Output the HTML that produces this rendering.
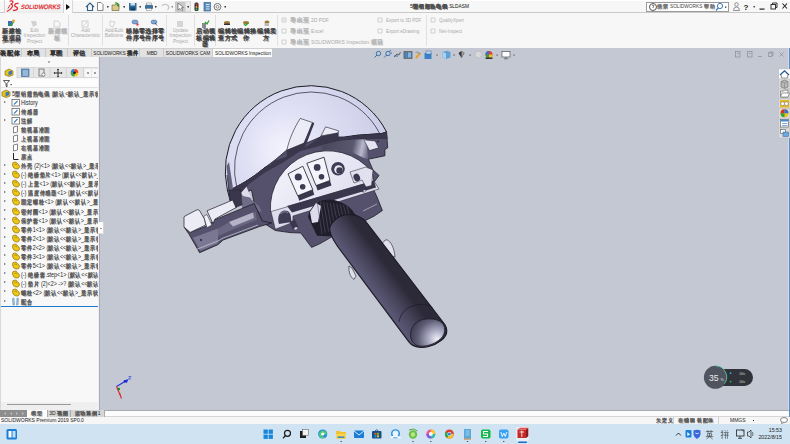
<!DOCTYPE html>
<html><head><meta charset="utf-8">
<style>
*{box-sizing:border-box}
html,body{margin:0;padding:0}
body{width:790px;height:444px;overflow:hidden;position:relative;font-family:"Liberation Sans",sans-serif;background:#c4c8d3;color:#333}
.a{position:absolute}
.c{letter-spacing:.8px;-webkit-text-stroke:.35px currentColor;text-shadow:.6px .7px 0 currentColor;opacity:.72}
#title{left:0;top:0;width:790px;height:13px;background:#f7f7f7;border-top:1px solid #fff;border-bottom:1px solid #c9c9c9}
#ribbon{left:0;top:13px;width:790px;height:35px;background:#f7f7f7}
#tabs{left:0;top:48px;width:273px;height:9px;background:#e2e2e2}
.tab{position:absolute;top:48px;height:9px;border-right:1px solid #c9c9c9;border-top:1px solid #d0d0d0;font-size:5.6px;line-height:8px;text-align:center;color:#222;white-space:nowrap;overflow:hidden}
#panel{left:0;top:57px;width:100px;height:353px;background:#f8f8f8;border-right:1px solid #b5b8c2}
.row{position:absolute;left:0;width:98px;height:9px;font-size:6.3px;line-height:9px;white-space:nowrap;overflow:hidden;color:#1e1e1e}
.arr{position:absolute;left:3.5px;top:2.6px;width:0;height:0;border-left:2.6px solid #666;border-top:1.8px solid transparent;border-bottom:1.8px solid transparent}
.pi{position:absolute;left:12px;top:1px;width:7px;height:7px;border-radius:50% 50% 40% 40%;background:#e8c21a;border:1px solid #8a7210}
.rt{position:absolute;left:21px;top:0;transform:scaleX(.85);transform-origin:0 0}
.rt .c{letter-spacing:.9px}
#btabs{left:0;top:410px;width:790px;height:7px;background:#fcfcfc;border-top:1px solid #a9abb3;border-bottom:1px solid #d6d6d6}
#status{left:0;top:417px;width:790px;height:7px;background:#f6f6f6;font-size:6px;line-height:7px}
#taskbar{left:0;top:424px;width:790px;height:20px;background:#d0e3f3}
.rb{position:absolute;font-size:5.6px;line-height:6.3px;text-align:center;color:#222;white-space:nowrap}
.dis{color:#aaa}
.rb .c{opacity:.85;font-size:6.3px;letter-spacing:.55px}
.tab .c{opacity:.95}
.tab span.t{position:absolute;left:50%;top:0;transform:translateX(-50%) scaleX(.86);transform-origin:50% 50%}
.sep{position:absolute;top:15px;width:1px;height:31px;background:#e0e0e0}
</style></head><body>


<!-- TITLE BAR -->
<div id="title" class="a"></div>
<div class="a" style="left:4px;top:0;width:60px;height:14px;background:linear-gradient(#fdfdfd,#ececec);border:1px solid #d4d4d4;border-top:none;border-radius:0 0 2px 2px"></div>
<svg class="a" style="left:6px;top:0" width="14" height="13" viewBox="0 0 14 13"><path d="M3.5 1.2 Q6.5 0.2 7 2 Q6.8 3.5 4.5 4.2 Q7 4.5 6.5 6.5 Q5.5 9 1 11.5" fill="none" stroke="#e0282e" stroke-width="1.2"/><path d="M12.5 3.5 Q9 3 8.6 5.3 Q8.5 6.6 10.6 7.2 Q12 7.8 11 9.6 Q9.5 10.8 7 10.3" fill="none" stroke="#e0282e" stroke-width="1.3"/><path d="M2 8.5 L4 5" stroke="#e0282e" stroke-width="1"/></svg>
<div class="a" style="left:20px;top:3.4px;font-size:6.3px;line-height:8px;font-weight:bold;color:#e0282e;transform:skewX(-12deg) scaleX(0.92);transform-origin:0 100%;letter-spacing:0;white-space:nowrap">SOLID<span style="font-weight:normal;-webkit-text-stroke:.25px #e0282e">WORKS</span></div>
<div class="a" style="left:64px;top:0;width:9px;height:13px;background:#fafafa;border-right:1px solid #d8d8d8"></div>
<div class="a" style="left:66px;top:3.5px;width:0;height:0;border-left:4px solid #111;border-top:3px solid transparent;border-bottom:3px solid transparent"></div>
<!-- quick access -->
<svg class="a" style="left:85px;top:1px" width="145" height="12" viewBox="85 1 145 12">
 <path d="M86 7 L90 3 L94 7 M87.5 6 V10.5 H92.5 V6" fill="none" stroke="#2d5f88" stroke-width="1.1"/>
 <path d="M97.5 2.5 H101 L103 4.5 V10.5 H97.5 Z" fill="#fff" stroke="#666" stroke-width="0.8"/>
 <rect x="107" y="6" width="1.5" height="1.5" fill="#333"/>
 <path d="M112 5 H115 L116 4 H119 V10.5 H112 Z" fill="#d9c98a" stroke="#7a6a3a" stroke-width="0.7"/><path d="M115 3 Q118 2.5 118.5 6 L117 5" fill="none" stroke="#2a9a2a" stroke-width="1.2"/>
 <rect x="123.5" y="6" width="1.5" height="1.5" fill="#333"/>
 <rect x="129" y="3" width="7.5" height="7.5" fill="#2b6a99"/><rect x="130.5" y="3" width="4.5" height="2.5" fill="#cfe0ee"/><rect x="130.5" y="7.5" width="4.5" height="3" fill="#1b4466"/>
 <rect x="139.5" y="6" width="1.5" height="1.5" fill="#333"/>
 <rect x="145" y="5" width="8" height="4" fill="#3a6f9e" rx="1"/><rect x="146.5" y="3" width="5" height="2" fill="#fff" stroke="#777" stroke-width="0.5"/><rect x="146.5" y="8.5" width="5" height="2" fill="#fff" stroke="#777" stroke-width="0.5"/>
 <rect x="155" y="6" width="1.5" height="1.5" fill="#333"/>
 <path d="M162 5.5 Q166 3 168.5 6 Q169.5 8 167.5 10" fill="none" stroke="#c4c4c4" stroke-width="1.2"/>
 <rect x="171.5" y="6" width="1.5" height="1.5" fill="#888"/>
 <rect x="175" y="1.5" width="16" height="10.5" fill="#c9c9c9"/><rect x="185.5" y="2" width="5" height="9.5" fill="#ebebeb"/>
 <path d="M178 3 L178 10 L180 8.5 L182 10.5 L183 9.8 L181.2 8 L183.5 7.5 Z" fill="#fff" stroke="#444" stroke-width="0.6"/>
 <rect x="187.5" y="6" width="1.5" height="1.5" fill="#333"/>
 <rect x="194.5" y="2.5" width="4" height="8.5" rx="1.5" fill="#333"/><circle cx="196.5" cy="4.5" r="1" fill="#e33"/><circle cx="196.5" cy="7" r="1" fill="#ea3"/><circle cx="196.5" cy="9.3" r="1" fill="#3b3"/>
 <rect x="204" y="2.5" width="6.5" height="8.5" fill="#5b8fbf" stroke="#2c5a88" stroke-width="0.6"/><path d="M206 4.5 H209.5 M206 6.7 H209.5 M206 9 H209.5" stroke="#fff" stroke-width="0.8"/>
 <circle cx="217.5" cy="6.8" r="3.4" fill="none" stroke="#777" stroke-width="1"/><circle cx="217.5" cy="6.8" r="1.4" fill="none" stroke="#777" stroke-width="0.8"/>
 <rect x="224.5" y="6" width="1.5" height="1.5" fill="#333"/>
</svg>
<div class="a" style="left:410px;top:2px;font-size:5.4px;line-height:9px;color:#111;white-space:nowrap">5<span class="c" style="font-weight:bold">型铝翅热电偶</span><span style="font-size:4.8px">.SLDASM</span></div>
<!-- search -->
<div class="a" style="left:646px;top:1.5px;width:83px;height:10px;background:#fff;border:1px solid #9a9a9a"></div>
<svg class="a" style="left:648px;top:2px" width="10" height="10" viewBox="0 0 10 10"><circle cx="5" cy="5" r="3.5" fill="none" stroke="#444" stroke-width="0.9"/><path d="M4 3.5 Q5 2.5 6 3.5 Q6 4.5 5 5 V6" fill="none" stroke="#444" stroke-width="0.7"/></svg>
<div class="a" style="left:657px;top:2.5px;font-size:4.8px;line-height:8px;color:#444;white-space:nowrap"><span class="c">搜索</span> SOLIDWORKS <span class="c">帮助</span></div>
<svg class="a" style="left:714px;top:2px" width="16" height="10" viewBox="0 0 16 10"><circle cx="6" cy="4" r="2.6" fill="none" stroke="#3a78b8" stroke-width="1"/><path d="M4.2 6 L2 8.5" stroke="#3a78b8" stroke-width="1.2"/><rect x="11" y="4.5" width="1.3" height="1.3" fill="#333"/></svg>
<svg class="a" style="left:732px;top:1px" width="58" height="12" viewBox="732 1 58 12">
 <circle cx="736.5" cy="4.5" r="1.8" fill="none" stroke="#777" stroke-width="0.8"/><path d="M733.5 10.5 Q733.5 7 736.5 7 Q739.5 7 739.5 10.5 Z" fill="none" stroke="#777" stroke-width="0.8"/>
 <text x="743.5" y="10" font-family="Liberation Sans" font-weight="bold" font-size="8" fill="#222">?</text>
 <rect x="753.5" y="6" width="1.4" height="1.4" fill="#333"/>
 <rect x="759.5" y="8.5" width="5" height="1.2" fill="#222"/>
 <rect x="771" y="4.5" width="4.5" height="4.5" fill="none" stroke="#222" stroke-width="0.9"/><path d="M772.5 4.5 V3 H777 V7.5 H775.5" fill="none" stroke="#222" stroke-width="0.9"/>
 <path d="M782.5 3.5 L787 8.5 M787 3.5 L782.5 8.5" stroke="#222" stroke-width="1.1"/>
</svg>

<div id="ribbon" class="a"></div>
<!-- ribbon buttons -->
<svg class="a" style="left:0;top:13px" width="480" height="35" viewBox="0 13 480 35">
 <rect x="8" y="21" width="4.5" height="5" fill="#3d6fb8"/><path d="M9.5 23.5 L11 25.5 L14 21.5" fill="none" stroke="#2aa02a" stroke-width="1.2"/><circle cx="13.5" cy="20.8" r="1.4" fill="#f0a020"/>
 <path d="M54 21 H58 L60 23 V27 H54 Z" fill="none" stroke="#c8c8c8" stroke-width="0.8"/>
 <path d="M31 21 L36 21 L37 25 L33 27 Z" fill="#d2d2d2"/>
 <rect x="82" y="21" width="6" height="6" fill="none" stroke="#c8c8c8" stroke-width="0.8"/><path d="M83 26 L87 22" stroke="#c8c8c8" stroke-width="0.7"/>
 <path d="M110 21 L115 22 L113 27 L110 26 Z" fill="none" stroke="#c8c8c8" stroke-width="0.8"/>
 <ellipse cx="135" cy="22" rx="3" ry="2" fill="#7ea6d6" stroke="#4a6f9a" stroke-width="0.6"/><rect x="136.5" y="23.5" width="2" height="2" fill="#e22"/>
 <ellipse cx="154" cy="22" rx="3" ry="2" fill="#7ea6d6" stroke="#4a6f9a" stroke-width="0.6"/><path d="M155 23 L157 25.5" stroke="#333" stroke-width="0.7"/>
 <rect x="177" y="21" width="6" height="6" fill="#d6d6d6"/>
 <rect x="202" y="23" width="4" height="5" fill="#8a8a8a"/><path d="M205 22 L207 24 L209 20.5" stroke="#2aa02a" stroke-width="1.3" fill="none"/>
 <ellipse cx="227" cy="22.5" rx="3" ry="1.5" fill="#a07830"/><rect x="224" y="23.5" width="6" height="1.5" fill="#333"/>
 <ellipse cx="246" cy="22.5" rx="3" ry="1.5" fill="#a07830"/><path d="M244 24 L245.5 25.5 L248.5 23" stroke="#2aa02a" stroke-width="1.2" fill="none"/>
 <ellipse cx="267" cy="22" rx="2.5" ry="1.5" fill="#a07830"/><rect x="264.5" y="23" width="4.5" height="3" fill="#bbb"/>
 <g fill="none" stroke="#c6c6c6" stroke-width="0.8">
  <path d="M282 18 H286 V22 H282 Z M283 21 L285 19"/><path d="M282 29 H286 V33 H282 Z"/><path d="M282 40 H286 V44 H282 Z"/>
  <path d="M378 18 H382 V22 H378 Z"/><path d="M378 29 H382 V33 H378 Z"/>
  <path d="M431 18 H435 V22 H431 Z"/><path d="M431 29 H435 V33 H431 Z"/>
 </g>
</svg>
<div class="sep" style="left:68px"></div><div class="sep" style="left:102px"></div><div class="sep" style="left:166px"></div><div class="sep" style="left:194px"></div><div class="sep" style="left:215px"></div><div class="sep" style="left:277px"></div><div class="sep" style="left:426px"></div>
<div class="rb" style="left:2px;top:28px;width:19px;font-size:6px;line-height:5.6px"><span class="c">新建检<br>查项目</span></div>
<div class="rb" style="left:1px;top:38.5px;width:21px;font-size:4.8px">(amp;%)</div>
<div class="rb dis" style="left:21px;top:28px;width:27px;font-size:4.8px;line-height:5.4px">Edit<br>Inspection<br>Project</div>
<div class="rb dis" style="left:48px;top:28px;width:19px;font-size:6px;line-height:5.6px"><span class="c">新建模<br>板</span></div>
<div class="rb dis" style="left:70px;top:28px;width:31px;font-size:4.8px;line-height:5.4px">Add<br>Characteristic</div>
<div class="rb dis" style="left:103px;top:28px;width:22px;font-size:4.8px;line-height:5.4px">Add/Edit<br>Balloons</div>
<div class="rb" style="left:126px;top:28px;width:19px;font-size:6px;line-height:5.6px"><span class="c">移除零<br>件序号</span></div>
<div class="rb" style="left:145px;top:28px;width:19px;font-size:6px;line-height:5.6px"><span class="c">选择零<br>件序号</span></div>
<div class="rb dis" style="left:167px;top:28px;width:27px;font-size:4.8px;line-height:5.4px">Update<br>Inspection<br>Project</div>
<div class="rb" style="left:196px;top:28px;width:19px;font-size:6px;line-height:5.6px"><span class="c">启动模<br>板编辑<br>器</span></div>
<div class="rb" style="left:218px;top:28px;width:19px;font-size:6px;line-height:5.6px"><span class="c">编辑检<br>查方式</span></div>
<div class="rb" style="left:237px;top:28px;width:19px;font-size:6px;line-height:5.6px"><span class="c">编辑操<br>作</span></div>
<div class="rb" style="left:257px;top:28px;width:19px;font-size:6px;line-height:5.6px"><span class="c">编辑卖<br>方</span></div>
<div class="rb dis" style="left:290px;top:17px;text-align:left;font-size:5px;line-height:6px"><span class="c">导出至</span> 2D PDF</div>
<div class="rb dis" style="left:290px;top:28px;text-align:left;font-size:5px;line-height:6px"><span class="c">导出至</span> Excel</div>
<div class="rb dis" style="left:290px;top:39px;text-align:left;font-size:5px;line-height:6px"><span class="c">导出至</span> SOLIDWORKS Inspection <span class="c">项目</span></div>
<div class="rb dis" style="left:386px;top:17px;text-align:left;font-size:5px;line-height:6px;transform:scaleX(.9);transform-origin:0 0">Export to 3D PDF</div>
<div class="rb dis" style="left:386px;top:28px;text-align:left;font-size:5px;line-height:6px;transform:scaleX(.9);transform-origin:0 0">Export eDrawing</div>
<div class="rb dis" style="left:439px;top:17px;text-align:left;font-size:5px;line-height:6px;transform:scaleX(.9);transform-origin:0 0">QualityXpert</div>
<div class="rb dis" style="left:439px;top:28px;text-align:left;font-size:5px;line-height:6px;transform:scaleX(.9);transform-origin:0 0">Net-Inspect</div>

<div id="tabs" class="a"></div>
<div class="tab" style="left:0;width:22px"><span class="c">装配体</span></div>
<div class="tab" style="left:22px;width:24px"><span class="c">布局</span></div>
<div class="tab" style="left:46px;width:22px"><span class="c">草图</span></div>
<div class="tab" style="left:68px;width:24px"><span class="c">评估</span></div>
<div class="tab" style="left:92px;width:48px"><span class="t">SOLIDWORKS <span class="c">插件</span></span></div>
<div class="tab" style="left:140px;width:24px"><span class="t">MBD</span></div>
<div class="tab" style="left:164px;width:49px"><span class="t">SOLIDWORKS CAM</span></div>
<div class="tab" style="left:213px;width:60px;background:#fbfbfb;height:9px"><span class="t">SOLIDWORKS Inspection</span></div>

<div id="panel" class="a"></div>
<div class="a" style="left:48px;top:61px;width:2px;height:2px;border-radius:1px;background:#999"></div>
<div class="a" style="left:0;top:67px;width:99px;height:11px;background:#e6e6e6;border-top:1px solid #d8d8d8;border-bottom:1px solid #d8d8d8"></div>
<div class="a" style="left:1px;top:67px;width:16px;height:11px;background:#f8f8f8"></div>
<svg class="a" style="left:0;top:67px" width="99" height="11" viewBox="0 67 99 11">
 <path d="M5 71 L9 69 L13 71 L13 75 L9 76.5 L5 75 Z" fill="#e8c21a" stroke="#7a6510" stroke-width="0.6"/><path d="M8.5 71.5 L12 70.5 L12 74 L8.5 75.5 Z" fill="#3a78c0"/>
 <path d="M17 67 V78 M33.5 67 V78 M50 67 V78 M66.5 67 V78 M83.5 67 V78" stroke="#cfcfcf" stroke-width="0.8"/>
 <rect x="21.5" y="69" width="7.5" height="7.5" fill="#6a9ac8" stroke="#335f8c" stroke-width="0.6"/><path d="M23 71 H28 M23 73 H28 M23 75 H28" stroke="#fff" stroke-width="0.6"/>
 <rect x="39" y="69" width="5" height="7" fill="none" stroke="#555" stroke-width="0.7"/><circle cx="43.5" cy="74.5" r="1.6" fill="#fff" stroke="#555" stroke-width="0.6"/>
 <path d="M58 69 V77 M54 73 H62" stroke="#222" stroke-width="0.9"/><path d="M58 68.5 L57 70 H59 Z M58 77.5 L57 76 H59 Z M53.5 73 L55 72 V74 Z M62.5 73 L61 72 V74 Z" fill="#222"/>
 <circle cx="74.5" cy="72.8" r="3.8" fill="#f4c20d"/><path d="M74.5 72.8 L74.5 69 A3.8 3.8 0 0 0 70.7 72.8 Z" fill="#2a7de1"/><path d="M74.5 72.8 L70.7 72.8 A3.8 3.8 0 0 0 74.5 76.6 Z" fill="#34a853"/><path d="M74.5 72.8 L78.3 72.8 A3.8 3.8 0 0 0 74.5 69 Z" fill="#ea4335"/><circle cx="74.5" cy="72.8" r="1.4" fill="#222"/>
 <rect x="84.5" y="69" width="6.5" height="8" fill="#f8f8f8"/><rect x="92" y="69" width="6.5" height="8" fill="#f8f8f8"/>
 <path d="M88.5 72 L86.8 73 L88.5 74 Z M94.5 72 L96.2 73 L94.5 74 Z" fill="#222"/>
</svg>
<div class="a" style="left:1px;top:79px;width:97px;height:9px;background:#fdfdfd;border-bottom:1px solid #e2e2e2"></div>
<svg class="a" style="left:3px;top:80px" width="10" height="8" viewBox="0 0 10 8"><path d="M0.5 0.5 H6.5 L4 3.5 V7 L3 6 V3.5 Z" fill="none" stroke="#333" stroke-width="0.8"/><rect x="7.5" y="4" width="1.2" height="1.2" fill="#333"/></svg>
<div class="row" style="top:89.00px"><svg class="a" style="left:1px;top:0" width="10" height="9" viewBox="0 0 10 9"><path d="M1 3 L5 1 L9 3 L9 7 L5 8.5 L1 7 Z" fill="#e8c21a" stroke="#7a6510" stroke-width="0.6"/><path d="M4.5 3.5 L8 2.5 L8 6 L4.5 7.5 Z" fill="#3a78c0"/></svg><span class="rt" style="left:12px">5<span class="c">型铝翅热电偶</span>  (<span class="c">默认</span>&lt;<span class="c">默认</span>_<span class="c">显示状态</span>-1</span></div>
<div class="row" style="top:98.04px"><i class="arr"></i><svg class="a" style="left:11px;top:0" width="9" height="9" viewBox="0 0 9 9"><rect x="1" y="1.5" width="7.5" height="6.5" fill="#fff" stroke="#555" stroke-width="0.7"/><path d="M3 6.5 L6.5 3" stroke="#3a80c0" stroke-width="1.1"/></svg><span class="rt">History</span></div>
<div class="row" style="top:107.08px"><svg class="a" style="left:11px;top:0" width="9" height="9" viewBox="0 0 9 9"><rect x="1" y="1.5" width="7.5" height="6.5" fill="#fff" stroke="#555" stroke-width="0.7"/><path d="M3 6.5 L6.5 3" stroke="#3a80c0" stroke-width="1.1"/></svg><span class="rt"><span class="c">传感器</span></span></div>
<div class="row" style="top:116.12px"><i class="arr"></i><svg class="a" style="left:11px;top:0" width="9" height="9" viewBox="0 0 9 9"><rect x="1" y="1.5" width="7.5" height="6.5" fill="#fff" stroke="#555" stroke-width="0.7"/><path d="M3 6.5 L6.5 3" stroke="#3a80c0" stroke-width="1.1"/></svg><span class="rt"><span class="c">注解</span></span></div>
<div class="row" style="top:125.16px"><svg class="a" style="left:11px;top:0" width="9" height="9" viewBox="0 0 9 9"><path d="M2.5 2 L6.5 1 L6.5 7 L2.5 8 Z" fill="#fff" stroke="#555" stroke-width="0.7"/></svg><span class="rt"><span class="c">前视基准面</span></span></div>
<div class="row" style="top:134.20px"><svg class="a" style="left:11px;top:0" width="9" height="9" viewBox="0 0 9 9"><path d="M2.5 2 L6.5 1 L6.5 7 L2.5 8 Z" fill="#fff" stroke="#555" stroke-width="0.7"/></svg><span class="rt"><span class="c">上视基准面</span></span></div>
<div class="row" style="top:143.24px"><svg class="a" style="left:11px;top:0" width="9" height="9" viewBox="0 0 9 9"><path d="M2.5 2 L6.5 1 L6.5 7 L2.5 8 Z" fill="#fff" stroke="#555" stroke-width="0.7"/></svg><span class="rt"><span class="c">右视基准面</span></span></div>
<div class="row" style="top:152.28px"><svg class="a" style="left:11px;top:0" width="9" height="9" viewBox="0 0 9 9"><path d="M2.5 1 V7.5 H7.5" fill="none" stroke="#222" stroke-width="1"/></svg><span class="rt"><span class="c">原点</span></span></div>
<div class="row" style="top:161.32px"><i class="arr"></i><svg class="a" style="left:11px;top:0" width="9" height="9" viewBox="0 0 9 9"><path d="M1.5 4 Q1 1 4 1 Q6 1 6.5 3 Q8.5 3.5 8.5 6 Q8 8.5 5 8 Q2 7.5 1.5 4 Z" fill="#f0c814" stroke="#8a7008" stroke-width="0.7"/><path d="M3.5 3.5 Q5 2.5 6 4" fill="none" stroke="#8a7008" stroke-width="0.6"/></svg><span class="rt"><span class="c">外壳</span> (2)&lt;1&gt; (<span class="c">默认</span>&lt;&lt;<span class="c">默认</span>&gt;_<span class="c">显示状态</span></span></div>
<div class="row" style="top:170.36px"><i class="arr"></i><svg class="a" style="left:11px;top:0" width="9" height="9" viewBox="0 0 9 9"><path d="M1.5 4 Q1 1 4 1 Q6 1 6.5 3 Q8.5 3.5 8.5 6 Q8 8.5 5 8 Q2 7.5 1.5 4 Z" fill="#f0c814" stroke="#8a7008" stroke-width="0.7"/><path d="M3.5 3.5 Q5 2.5 6 4" fill="none" stroke="#8a7008" stroke-width="0.6"/></svg><span class="rt">(-) <span class="c">绝缘垫片</span>&lt;1&gt; (<span class="c">默认</span>&lt;&lt;<span class="c">默认</span>&gt;_<span class="c">显示状态</span></span></div>
<div class="row" style="top:179.40px"><i class="arr"></i><svg class="a" style="left:11px;top:0" width="9" height="9" viewBox="0 0 9 9"><path d="M1.5 4 Q1 1 4 1 Q6 1 6.5 3 Q8.5 3.5 8.5 6 Q8 8.5 5 8 Q2 7.5 1.5 4 Z" fill="#f0c814" stroke="#8a7008" stroke-width="0.7"/><path d="M3.5 3.5 Q5 2.5 6 4" fill="none" stroke="#8a7008" stroke-width="0.6"/></svg><span class="rt">(-) <span class="c">上盖</span>&lt;1&gt; (<span class="c">默认</span>&lt;&lt;<span class="c">默认</span>&gt;_<span class="c">显示状态</span></span></div>
<div class="row" style="top:188.44px"><i class="arr"></i><svg class="a" style="left:11px;top:0" width="9" height="9" viewBox="0 0 9 9"><path d="M1.5 4 Q1 1 4 1 Q6 1 6.5 3 Q8.5 3.5 8.5 6 Q8 8.5 5 8 Q2 7.5 1.5 4 Z" fill="#f0c814" stroke="#8a7008" stroke-width="0.7"/><path d="M3.5 3.5 Q5 2.5 6 4" fill="none" stroke="#8a7008" stroke-width="0.6"/></svg><span class="rt">(-) <span class="c">温度传感器</span>&lt;1&gt; (<span class="c">默认</span>&lt;&lt;<span class="c">默认</span>&gt;_<span class="c">显示状态</span></span></div>
<div class="row" style="top:197.48px"><i class="arr"></i><svg class="a" style="left:11px;top:0" width="9" height="9" viewBox="0 0 9 9"><path d="M1.5 4 Q1 1 4 1 Q6 1 6.5 3 Q8.5 3.5 8.5 6 Q8 8.5 5 8 Q2 7.5 1.5 4 Z" fill="#f0c814" stroke="#8a7008" stroke-width="0.7"/><path d="M3.5 3.5 Q5 2.5 6 4" fill="none" stroke="#8a7008" stroke-width="0.6"/></svg><span class="rt"><span class="c">固定螺栓</span>&lt;1&gt; (<span class="c">默认</span>&lt;&lt;<span class="c">默认</span>&gt;_<span class="c">显示状态</span></span></div>
<div class="row" style="top:206.52px"><i class="arr"></i><svg class="a" style="left:11px;top:0" width="9" height="9" viewBox="0 0 9 9"><path d="M1.5 4 Q1 1 4 1 Q6 1 6.5 3 Q8.5 3.5 8.5 6 Q8 8.5 5 8 Q2 7.5 1.5 4 Z" fill="#f0c814" stroke="#8a7008" stroke-width="0.7"/><path d="M3.5 3.5 Q5 2.5 6 4" fill="none" stroke="#8a7008" stroke-width="0.6"/></svg><span class="rt"><span class="c">密封圈</span>&lt;1&gt; (<span class="c">默认</span>&lt;&lt;<span class="c">默认</span>&gt;_<span class="c">显示状态</span></span></div>
<div class="row" style="top:215.56px"><i class="arr"></i><svg class="a" style="left:11px;top:0" width="9" height="9" viewBox="0 0 9 9"><path d="M1.5 4 Q1 1 4 1 Q6 1 6.5 3 Q8.5 3.5 8.5 6 Q8 8.5 5 8 Q2 7.5 1.5 4 Z" fill="#f0c814" stroke="#8a7008" stroke-width="0.7"/><path d="M3.5 3.5 Q5 2.5 6 4" fill="none" stroke="#8a7008" stroke-width="0.6"/></svg><span class="rt"><span class="c">保护套</span>&lt;1&gt; (<span class="c">默认</span>&lt;&lt;<span class="c">默认</span>&gt;_<span class="c">显示状态</span></span></div>
<div class="row" style="top:224.60px"><i class="arr"></i><svg class="a" style="left:11px;top:0" width="9" height="9" viewBox="0 0 9 9"><path d="M1.5 4 Q1 1 4 1 Q6 1 6.5 3 Q8.5 3.5 8.5 6 Q8 8.5 5 8 Q2 7.5 1.5 4 Z" fill="#f0c814" stroke="#8a7008" stroke-width="0.7"/><path d="M3.5 3.5 Q5 2.5 6 4" fill="none" stroke="#8a7008" stroke-width="0.6"/></svg><span class="rt"><span class="c">零件</span>1&lt;1&gt; (<span class="c">默认</span>&lt;&lt;<span class="c">默认</span>&gt;_<span class="c">显示状态</span>&lt;</span></div>
<div class="row" style="top:233.64px"><i class="arr"></i><svg class="a" style="left:11px;top:0" width="9" height="9" viewBox="0 0 9 9"><path d="M1.5 4 Q1 1 4 1 Q6 1 6.5 3 Q8.5 3.5 8.5 6 Q8 8.5 5 8 Q2 7.5 1.5 4 Z" fill="#f0c814" stroke="#8a7008" stroke-width="0.7"/><path d="M3.5 3.5 Q5 2.5 6 4" fill="none" stroke="#8a7008" stroke-width="0.6"/></svg><span class="rt"><span class="c">零件</span>2&lt;1&gt; (<span class="c">默认</span>&lt;&lt;<span class="c">默认</span>&gt;_<span class="c">显示状态</span></span></div>
<div class="row" style="top:242.68px"><i class="arr"></i><svg class="a" style="left:11px;top:0" width="9" height="9" viewBox="0 0 9 9"><path d="M1.5 4 Q1 1 4 1 Q6 1 6.5 3 Q8.5 3.5 8.5 6 Q8 8.5 5 8 Q2 7.5 1.5 4 Z" fill="#f0c814" stroke="#8a7008" stroke-width="0.7"/><path d="M3.5 3.5 Q5 2.5 6 4" fill="none" stroke="#8a7008" stroke-width="0.6"/></svg><span class="rt"><span class="c">零件</span>2&lt;2&gt; (<span class="c">默认</span>&lt;&lt;<span class="c">默认</span>&gt;_<span class="c">显示状态</span></span></div>
<div class="row" style="top:251.72px"><i class="arr"></i><svg class="a" style="left:11px;top:0" width="9" height="9" viewBox="0 0 9 9"><path d="M1.5 4 Q1 1 4 1 Q6 1 6.5 3 Q8.5 3.5 8.5 6 Q8 8.5 5 8 Q2 7.5 1.5 4 Z" fill="#f0c814" stroke="#8a7008" stroke-width="0.7"/><path d="M3.5 3.5 Q5 2.5 6 4" fill="none" stroke="#8a7008" stroke-width="0.6"/></svg><span class="rt"><span class="c">零件</span>3&lt;1&gt; (<span class="c">默认</span>&lt;&lt;<span class="c">默认</span>&gt;_<span class="c">显示状态</span></span></div>
<div class="row" style="top:260.76px"><i class="arr"></i><svg class="a" style="left:11px;top:0" width="9" height="9" viewBox="0 0 9 9"><path d="M1.5 4 Q1 1 4 1 Q6 1 6.5 3 Q8.5 3.5 8.5 6 Q8 8.5 5 8 Q2 7.5 1.5 4 Z" fill="#f0c814" stroke="#8a7008" stroke-width="0.7"/><path d="M3.5 3.5 Q5 2.5 6 4" fill="none" stroke="#8a7008" stroke-width="0.6"/></svg><span class="rt"><span class="c">零件</span>5&lt;1&gt; (<span class="c">默认</span>&lt;&lt;<span class="c">默认</span>&gt;_<span class="c">显示状态</span></span></div>
<div class="row" style="top:269.80px"><i class="arr"></i><svg class="a" style="left:11px;top:0" width="9" height="9" viewBox="0 0 9 9"><path d="M1.5 4 Q1 1 4 1 Q6 1 6.5 3 Q8.5 3.5 8.5 6 Q8 8.5 5 8 Q2 7.5 1.5 4 Z" fill="#f0c814" stroke="#8a7008" stroke-width="0.7"/><path d="M3.5 3.5 Q5 2.5 6 4" fill="none" stroke="#8a7008" stroke-width="0.6"/></svg><span class="rt">(-) <span class="c">绝缘套</span>.step&lt;1&gt; (<span class="c">默认</span>&lt;&lt;<span class="c">默认</span>&gt;</span></div>
<div class="row" style="top:278.84px"><i class="arr"></i><svg class="a" style="left:11px;top:0" width="9" height="9" viewBox="0 0 9 9"><path d="M1.5 4 Q1 1 4 1 Q6 1 6.5 3 Q8.5 3.5 8.5 6 Q8 8.5 5 8 Q2 7.5 1.5 4 Z" fill="#f0c814" stroke="#8a7008" stroke-width="0.7"/><path d="M3.5 3.5 Q5 2.5 6 4" fill="none" stroke="#8a7008" stroke-width="0.6"/></svg><span class="rt">(-) <span class="c">垫片</span> (2)&lt;2&gt; -&gt;? (<span class="c">默认</span>&lt;&lt;<span class="c">默认</span>&gt;</span></div>
<div class="row" style="top:287.88px"><i class="arr"></i><svg class="a" style="left:11px;top:0" width="9" height="9" viewBox="0 0 9 9"><path d="M1.5 4 Q1 1 4 1 Q6 1 6.5 3 Q8.5 3.5 8.5 6 Q8 8.5 5 8 Q2 7.5 1.5 4 Z" fill="#f0c814" stroke="#8a7008" stroke-width="0.7"/><path d="M3.5 3.5 Q5 2.5 6 4" fill="none" stroke="#8a7008" stroke-width="0.6"/></svg><span class="rt"><span class="c">螺栓</span>&lt;2&gt; (<span class="c">默认</span>&lt;&lt;<span class="c">默认</span>&gt;_<span class="c">显示状态</span></span></div>
<div class="row" style="top:296.92px"><i class="arr"></i><svg class="a" style="left:11px;top:0" width="9" height="9" viewBox="0 0 9 9"><path d="M1.5 2 Q1.5 1 3 1 L3.5 8 L2 8 Z M7.5 2 Q7.5 1 6 1 L5.5 8 L7 8 Z" fill="#9ec4e0" stroke="#5a88b0" stroke-width="0.5"/></svg><span class="rt"><span class="c">配合</span></span></div>
<div class="a" style="left:0;top:306.3px;width:98px;height:1.2px;background:#1a7ad0"></div>
<div class="a" style="left:98px;top:57px;width:1px;height:353px;background:#efefef"></div><div class="a" style="left:99px;top:57px;width:1.4px;height:353px;background:#a9acb6"></div>
<div class="a" style="left:1px;top:401.5px;width:97px;height:8px;background:#efefef"></div><div class="a" style="left:7px;top:404px;width:64px;height:1.3px;background:#9a9a9a"></div><div class="a" style="left:0;top:57px;width:1px;height:353px;background:#d8d8d8"></div>

<div id="btabs" class="a"></div>
<div class="a" style="left:0;top:410px;width:27px;height:7px;background:#8e8e8e"></div>
<svg class="a" style="left:0;top:410px" width="27" height="7" viewBox="0 0 27 7"><path d="M4 3.5 L6 2 V5 Z M10 3.5 L12 2 V5 Z M16 2 L18 3.5 L16 5 Z M22 2 L24 3.5 L22 5 Z" fill="#bdbdbd"/></svg>
<div class="a" style="left:27px;top:410px;width:20px;height:7px;background:#fff;font-size:5px;line-height:7px;text-align:center;color:#222"><span class="c">模型</span></div>
<div class="a" style="left:47px;top:410px;width:24px;height:7px;background:#d6d6d6;border-left:1px solid #aaa;border-right:1px solid #aaa;font-size:5px;line-height:7px;text-align:center;color:#222">3D <span class="c">视图</span></div>
<div class="a" style="left:71px;top:410px;width:34px;height:7px;background:#d6d6d6;border-right:1px solid #aaa;font-size:5px;line-height:7px;text-align:center;color:#222"><span class="c">运动算例</span>1</div>
<div id="status" class="a"></div>
<div class="a" style="left:1px;top:417px;font-size:5.7px;line-height:7px;color:#222;white-space:nowrap;transform:scaleX(.88);transform-origin:0 0">SOLIDWORKS Premium 2019 SP0.0</div>
<div class="a" style="left:656px;top:417px;font-size:5px;line-height:7px;color:#222;white-space:nowrap"><span class="c">欠定义</span></div>
<div class="a" style="left:673px;top:417px;width:1px;height:7px;background:#d0d0d0"></div>
<div class="a" style="left:678px;top:417px;font-size:5px;line-height:7px;color:#222;white-space:nowrap"><span class="c">在编辑</span> <span class="c">装配体</span></div>
<div class="a" style="left:718px;top:417px;width:1px;height:7px;background:#d0d0d0"></div>
<div class="a" style="left:730px;top:417px;font-size:5px;line-height:7px;color:#222;white-space:nowrap">MMGS</div>
<div class="a" style="left:753px;top:420px;width:1.3px;height:1.3px;background:#222"></div>
<svg class="a" style="left:779px;top:417px" width="10" height="7" viewBox="0 0 10 7"><ellipse cx="5" cy="3" rx="3.5" ry="2.5" fill="#fff" stroke="#555" stroke-width="0.7"/><path d="M3 5 L2.5 6.8 L5 5.3" fill="#fff" stroke="#555" stroke-width="0.6"/></svg>
<div id="taskbar" class="a"></div>
<svg class="a" style="left:0;top:424px" width="790" height="20" viewBox="0 424 790 20">
 <rect x="6.5" y="429" width="10.5" height="10.5" rx="1.5" fill="#1b7fd8"/><rect x="8.5" y="431" width="3" height="6.5" fill="#fff"/><rect x="12.5" y="431" width="3" height="6.5" fill="#bfe0fb"/>
 <g fill="#1a86da"><rect x="263.5" y="429.5" width="4.3" height="4.3"/><rect x="268.6" y="429.5" width="4.3" height="4.3"/><rect x="263.5" y="434.6" width="4.3" height="4.3"/><rect x="268.6" y="434.6" width="4.3" height="4.3"/></g>
 <circle cx="287.5" cy="433.3" r="3" fill="none" stroke="#1c1c1c" stroke-width="1.2"/><path d="M285.4 435.5 L283 438.3" stroke="#1c1c1c" stroke-width="1.3"/>
 <rect x="300" y="431" width="6" height="7" fill="#1c1c1c"/><rect x="302.5" y="429.5" width="6" height="6" fill="#f0f0f0" stroke="#555" stroke-width="0.5"/>
 <circle cx="322.7" cy="434" r="4.6" fill="#1d8fd8"/><path d="M319 434 Q320 430 323.5 430.5 Q327 431.5 327 434.5 L321.5 434.5 Q322 437 325.5 437.3 Q323 439.2 320.5 437.5 Q318.5 436 319 434 Z" fill="#5fd36a" opacity="0.85"/><circle cx="322.8" cy="434" r="1.6" fill="#fff"/>
 <path d="M336 431 H340 L341 432 H346 V438.5 H336 Z" fill="#f2c230"/><rect x="336" y="434" width="10" height="4.5" fill="#f8d65a"/><rect x="337.5" y="436.5" width="7" height="1.3" fill="#1e78c8"/><rect x="340.5" y="441" width="1.4" height="1" fill="#555"/>
 <rect x="354" y="430.5" width="10" height="7.5" rx="0.8" fill="#1a7fd4"/><path d="M354 431 L359 435 L364 431" fill="none" stroke="#cfe8ff" stroke-width="1"/>
 <rect x="372" y="431" width="9.5" height="7.5" rx="1" fill="#1a4f8a"/><rect x="374.5" y="432.8" width="2" height="2" fill="#f25022"/><rect x="377" y="432.8" width="2" height="2" fill="#7fba00"/><rect x="374.5" y="435.3" width="2" height="2" fill="#00a4ef"/><rect x="377" y="435.3" width="2" height="2" fill="#ffb900"/><path d="M375 431 Q376.8 428.5 378.5 431" fill="none" stroke="#1a4f8a" stroke-width="0.9"/>
 <circle cx="395.5" cy="433.8" r="4.5" fill="#2a8ee0"/><circle cx="395.5" cy="433.5" r="3" fill="#eaf6ff"/><path d="M391 437.5 Q395 435.5 400.5 438" fill="none" stroke="#fff" stroke-width="1.5"/>
 <circle cx="413" cy="434.5" r="4.2" fill="#6cc040"/><circle cx="413" cy="434.5" r="2.2" fill="#b8e68e"/><path d="M409 430 Q414 427.5 417.5 431" fill="none" stroke="#4aa030" stroke-width="0.9"/><rect x="412.3" y="441" width="1.4" height="1" fill="#555"/>
 <circle cx="430.8" cy="434" r="4.5" fill="#f2568f"/><path d="M430.8 434 L430.8 429.5 A4.5 4.5 0 0 1 435.3 434 Z" fill="#f6c82c"/><path d="M430.8 434 L435.3 434 A4.5 4.5 0 0 1 430.8 438.5 Z" fill="#2cc0a8"/><path d="M430.8 434 L430.8 438.5 A4.5 4.5 0 0 1 426.3 434 Z" fill="#7a5af0"/><circle cx="430.8" cy="434" r="2" fill="#fff"/><rect x="430.1" y="441" width="1.4" height="1" fill="#555"/>
 <circle cx="449.4" cy="434" r="4.5" fill="#e04030"/><path d="M449.4 434 L445.5 431.8 A4.5 4.5 0 0 0 447.2 438 Z" fill="#2aa84a"/><path d="M449.4 434 L447.2 438 A4.5 4.5 0 0 0 453.9 434 Z" fill="#f6c02a"/><circle cx="449.4" cy="434" r="2" fill="#fff"/><circle cx="449.4" cy="434" r="1.5" fill="#2a7ae0"/>
 <rect x="464" y="429" width="7" height="9.5" fill="#5aa8d8"/><path d="M465.5 431 H469.5 M465.5 433 H469.5 M465.5 435 H469.5" stroke="#d0ecff" stroke-width="0.6"/><rect x="464" y="438.5" width="7" height="1" fill="#c07830"/><rect x="466.8" y="441" width="1.4" height="1" fill="#555"/>
 <rect x="481" y="429.5" width="9.5" height="9" rx="1.8" fill="#15b84a"/><path d="M488 431.5 H483.5 V434 H487.5 V436.5 H483" fill="none" stroke="#fff" stroke-width="1.1"/><rect x="485" y="441" width="1.4" height="1" fill="#555"/>
 <rect x="499" y="429.5" width="9.5" height="9" rx="1.8" fill="#3aa0f0"/><path d="M500.8 432 L502.3 436.5 L503.8 433 L505.3 436.5 L506.8 432" fill="none" stroke="#fff" stroke-width="0.9"/><rect x="503" y="441" width="1.4" height="1" fill="#555"/>
 <rect x="516" y="427" width="13" height="14" rx="1.5" fill="#e8eef4"/>
 <rect x="517.5" y="429.5" width="8.5" height="8.5" fill="#c42a2a"/><path d="M517.5 429.5 L520 427.8 H528.3 L526 429.5 Z" fill="#e05050"/><path d="M526 429.5 L528.3 427.8 V436.3 L526 438 Z" fill="#8a1a1a"/><path d="M519.5 432 H524 M521.8 430.5 V437" stroke="#fff" stroke-width="0.8"/>
 <rect x="518" y="441.5" width="9" height="1.5" rx="0.7" fill="#1a6fc8"/>
 <path d="M676 435.5 L678.5 433 L681 435.5" fill="none" stroke="#222" stroke-width="0.9"/>
 <rect x="685.5" y="430" width="6" height="7.5" rx="1" fill="#1a7fd8"/><path d="M687.3 432 L690 434.5 L687.3 436" fill="#fff"/>
 <path d="M693.5 430.5 Q697 429 700.5 430.5 V434.5 Q700 437.5 697 439 Q694 437.5 693.5 434.5 Z" fill="#3a66d8"/><path d="M695.3 433 Q697 434.5 698.7 433" fill="none" stroke="#fff" stroke-width="0.8"/>
</svg>
<svg class="a" style="left:704px;top:428px" width="26" height="12" viewBox="704 428 26 12"><g fill="none" stroke="#3a3a3a" stroke-width="0.6">
<path d="M705.8 431.5 H713.2 M708 430 V433 M711 430 V433 M707.4 433.6 H711.6 V436 H707.4 Z M709.5 432.8 V436.5 M705.8 436.6 H713.2 M709.5 436.6 L706.5 439 M709.5 436.6 L712.6 439"/>
<path d="M720.6 432.3 H723.6 M722.2 430 V438.6 L721.4 438 M720.8 435.8 L723.6 434.6 M724.8 430.2 L725.6 431.4 M727.8 430.2 L727 431.4 M724 432.6 H728.8 M724 435.2 H728.8 M725.4 432.6 V438.8 M727.4 432.6 V438.8"/>
</g></svg>
<svg class="a" style="left:736px;top:428px" width="20" height="12" viewBox="736 428 20 12"><rect x="736.5" y="430" width="7.5" height="6" fill="none" stroke="#222" stroke-width="0.8"/><path d="M740 436 V438 M738 438.3 H742" stroke="#222" stroke-width="0.8"/><path d="M741.5 429.5 L743.5 431.5" stroke="#222" stroke-width="0.7"/><path d="M747.5 432 H749 L751 430 V438 L749 436 H747.5 Z" fill="none" stroke="#222" stroke-width="0.7"/><path d="M752.5 432 Q753.5 434 752.5 436" fill="none" stroke="#222" stroke-width="0.6"/></svg>
<div class="a" style="left:752px;top:427px;width:30px;font-size:5.3px;line-height:6.6px;color:#222;text-align:right">15:53<br>2022/8/15</div>



<!--MODEL-->
<svg class="a" style="left:0;top:0" width="790" height="444" viewBox="0 0 790 444">
<defs>
<radialGradient id="gd" cx="285" cy="150" r="100" gradientUnits="userSpaceOnUse"><stop offset="0" stop-color="#f4f4fe"/><stop offset="0.45" stop-color="#dedef4"/><stop offset="1" stop-color="#cdcde8"/></radialGradient>
<linearGradient id="gt" x1="357" y1="292" x2="389" y2="268" gradientUnits="userSpaceOnUse"><stop offset="0" stop-color="#2a2836"/><stop offset="0.1" stop-color="#45425c"/><stop offset="0.35" stop-color="#5a5774"/><stop offset="0.7" stop-color="#444158"/><stop offset="1" stop-color="#2c2a38"/></linearGradient>
<radialGradient id="gc" cx="437" cy="339" r="26" gradientUnits="userSpaceOnUse"><stop offset="0" stop-color="#eeeef8"/><stop offset="0.35" stop-color="#a8a8c0"/><stop offset="0.75" stop-color="#5e5b74"/><stop offset="1" stop-color="#45425a"/></radialGradient>
<linearGradient id="gp" x1="290" y1="150" x2="360" y2="215" gradientUnits="userSpaceOnUse"><stop offset="0" stop-color="#f2f2fb"/><stop offset="1" stop-color="#dcdcee"/></linearGradient>
<linearGradient id="gs" x1="325" y1="145" x2="370" y2="155" gradientUnits="userSpaceOnUse"><stop offset="0" stop-color="#4a485c"/><stop offset="0.6" stop-color="#5a586e"/><stop offset="0.8" stop-color="#b8b8d0"/><stop offset="1" stop-color="#55536a"/></linearGradient>
</defs>
<path d="M230 200 L227.4 190 A85.4 85.4 0 0 1 386.5 131.8 L382.0 133.5 L357.0 135.3 L345.0 137.6 L338.6 137.0 L320.5 137.0 L305.0 147.5 L304.7 148.2 L286.8 156.6 L275.0 160.7 L270.0 165.0 L265.0 167.5 L255.3 175.1 L245.1 181.9 L239.0 185.3 L233.0 188.5 Z" fill="url(#gd)" stroke="#1b1a24" stroke-width="1"/>
<path d="M236.9 188 A76.9 76.9 0 0 1 379.4 133" fill="none" stroke="#2e2c3a" stroke-width="0.75"/>
<path d="M226.6 166.0 L229.0 162.0 L233.0 188.5 L233.0 206.0 L229.6 203.0 Z" fill="#62607a"/>
<path d="M227 175 L230.5 202" stroke="#2a2838" stroke-width="0.8"/>
<path d="M233.0 188.5 L239.0 185.3 L245.1 181.9 L255.3 175.1 L265.0 167.5 L275.0 160.0 L286.8 150.0 L304.8 143.8 L320.5 137.0 L339.3 137.5 L357.0 135.3 L382.0 133.5 L386.6 131.8 L387.7 147.8 L384.9 149.5 L384.9 155.8 L368.3 159.2 L373.0 170.0 L379.0 175.4 L371.6 185.5 L377.0 197.0 L382.4 210.5 L374.3 216.0 L363.5 221.4 L332.3 236.6 L319.7 243.8 L311.6 247.4 L300.8 233.0 L290.0 232.6 L275.3 230.5 L262.0 222.0 L254.2 203.5 L251.5 190.0 L241.0 195.0 L236.0 207.6 Z" fill="#55516c" stroke="#1b1a24" stroke-width="0.8"/>
<path d="M386.6 131.8 L382.0 133.5 L357.0 135.3 L345.0 137.6 L338.6 137.0 L320.5 137.0 L305.0 147.5 L304.7 148.2 L286.8 156.6 L275.0 160.7 L270.0 165.0 L265.0 167.5 L255.3 175.1 L245.1 181.9 L239.0 185.3 L233.0 188.5 L241.0 193.0 L248.5 184.6 L265.0 172.5 L283.0 162.6 L300.0 151.2 L322.8 145.0 L339.3 141.0 L352.4 139.8 L366.0 139.2 L387.7 139.0 Z" fill="#3a374c"/>
<path d="M286.8 150.2 C289 140 294 128 300.3 118.4 L313.8 123 L304 143.1 Z" fill="#ececf7" stroke="#1b1a24" stroke-width="0.6"/>
<path d="M286.8 150.2 L304.0 143.1 L304.7 148.2 L286.8 157.3 Z" fill="#3a374c"/>
<path d="M312.0 122.4 L314.2 123.6 L304.7 148.2 L303.0 145.0 Z" fill="#3a374c"/>
<path d="M321.0 135.9 L325.6 126.9 L338.6 130.8 L338.0 133.0 Z" fill="#ececf6" stroke="#1b1a24" stroke-width="0.6"/>
<path d="M320.5 136.2 L338.6 132.5 L338.6 137.5 L320.5 141.0 Z" fill="#3a374c"/>
<path d="M322.8 145.0 L339.3 141.0 L352.4 139.8 L366.0 139.2 L368.3 159.2 L363.8 158.0 L351.0 151.8 L334.0 149.0 L322.0 149.5 Z" fill="url(#gs)"/>
<path d="M363.8 139.8 L375.2 141.0 L378.6 147.8 L369.5 150.6 Z" fill="#e2e2f0" stroke="#1b1a24" stroke-width="0.5"/>
<circle cx="378" cy="141.5" r="0.8" fill="#111"/>
<path d="M241.0 193.0 L246.5 186.8 L251.2 199.4 L259.0 205.7 L262.0 212.0 L242.0 208.0 Z" fill="#6e6c86"/>
<path d="M241.0 193.0 L246.5 186.8 L251.2 197.8 L243.0 196.0 Z" fill="#dcdcec"/>
<path d="M228.5 190.0 L240.7 190.0 L242.0 204.9 L235.3 207.6 L231.0 204.0 Z" fill="#3a374c" stroke="#1b1a24" stroke-width="0.5"/>
<path d="M270.5 212 A57.2 57.2 0 0 1 372 172 L374 182 L272 213 Z" fill="url(#gp)" stroke="#1b1a24" stroke-width="0.7"/>
<path d="M271.0 211.6 L374.0 181.0 L379.0 189.0 L293.0 216.0 L292.8 222.4 L275.3 229.2 Z" fill="#dcdcec" stroke="#1b1a24" stroke-width="0.5"/>
<path d="M287.0 206.0 L374.0 180.5 L376.0 187.5 L292.0 212.5 Z" fill="#3a374c"/>
<path d="M279 224 C277 218 279 211 284.5 210.5 C289 210.3 291 214 291 218 L291.5 222 Z" fill="#3e3b54"/>
<path d="M280.5 214 C282 211.5 286 211 288 213" fill="none" stroke="#7a7792" stroke-width="1.2"/>
<path d="M289.5 222.0 L295.0 219.5 L298.5 227.5 L293.0 230.0 Z" fill="#3a374c"/>
<ellipse cx="295.8" cy="228.3" rx="1.8" ry="1.2" fill="#c8c8d8" transform="rotate(-25 295.8 228.3)"/>
<path d="M350.0 172.0 L366.0 167.0 L373.0 170.0 L371.6 185.5 L366.0 187.0 L362.0 180.0 L354.0 183.0 Z" fill="#e0e0ee" stroke="#1b1a24" stroke-width="0.5"/>
<ellipse cx="356.8" cy="177.5" rx="3.2" ry="3.9" fill="#3a3850" transform="rotate(-25 356.8 177.5)"/>
<ellipse cx="363.5" cy="189" rx="2.8" ry="3.4" fill="#3a3850" transform="rotate(-25 363.5 189)"/>
<ellipse cx="364.5" cy="191" rx="1.3" ry="0.9" fill="#c8c8d8"/>
<path d="M363 211 L377 204" stroke="#cfcfe0" stroke-width="0.6"/>
<path d="M297.7 195.8 L312.8 189.7 L314.3 194.7 L299.2 200.8 Z" fill="#3a374c"/>
<path d="M288.0 173.9 L302.8 166.2 L312.8 189.7 L297.7 195.8 Z" fill="#f4f4fc" stroke="#1b1a24" stroke-width="0.8"/>
<circle cx="298.3" cy="177.0" r="3.6" fill="#3e3b52"/>
<circle cx="302.7" cy="186.8" r="2.8" fill="#3e3b52"/>
<path d="M316.0 185.6 L330.0 180.5 L331.5 185.5 L317.5 190.6 Z" fill="#3a374c"/>
<path d="M306.8 163.3 L324.0 157.2 L330.0 180.5 L316.0 185.6 Z" fill="#f4f4fc" stroke="#1b1a24" stroke-width="0.8"/>
<circle cx="317.2" cy="167.4" r="3.4" fill="#3e3b52"/>
<circle cx="321.5" cy="176.8" r="2.8" fill="#3e3b52"/>
<circle cx="338" cy="168.8" r="6.8" fill="#3e3b52"/><circle cx="338.5" cy="169.5" r="4.3" fill="#e8e8f4"/><circle cx="339.5" cy="170.5" r="3.2" fill="#3e3b52"/>
<path d="M184.0 227.0 L190.2 232.4 L207.0 226.0 L215.0 219.7 L254.2 203.5 L262.3 221.0 L271.8 223.0 L259.6 226.5 L223.1 240.0 L218.0 244.6 L199.6 252.7 L188.8 233.8 Z" fill="#55516c" stroke="#1b1a24" stroke-width="0.8"/>
<path d="M192.9 237.8 L218.0 228.4 L218.0 243.2 L200.3 250.7 Z" fill="#7a7792"/>
<path d="M195 250 L219 240.5 L222 238.5 L258 225" fill="none" stroke="#c4c4d6" stroke-width="0.8"/>
<path d="M218.0 228.4 L231.2 221.1 L255.5 211.6 L256.9 219.7 L235.3 228.5 L218.0 236.0 Z" fill="#6a6782"/>
<path d="M229.0 222.0 L253.0 212.5 L254.0 218.0 L233.0 226.5 Z" fill="#b4b2c6"/>
<circle cx="201" cy="240" r="1" fill="#222"/>
<path d="M184 218 Q183.4 216.9 185 216 L197 209.8 Q198.3 209.5 199.5 210.5 L204.4 218.9 L205.7 225 L190.2 232.4 L184 227 Z" fill="#ececf6" stroke="#1b1a24" stroke-width="0.7"/>
<path d="M203.7 216.2 L207.0 214.5 L211.8 225.0 L207.0 227.7 Z" fill="#f0f0f8" stroke="#1b1a24" stroke-width="0.5"/>
<path d="M207.0 210.8 L232.6 200.0 L236.0 207.6 L215.0 219.0 L213.0 223.6 Z" fill="#ececf6" stroke="#1b1a24" stroke-width="0.7"/>
<path d="M308 217 C310 205 320 199 330 199.5 C342 200.5 351 207 354 213 L363.5 221.4 L332.3 236.6 L317 235.7 Z" fill="#201e2a"/>
<path d="M310.0 212.0 L316.0 203.0 L321.0 206.0 L318.0 222.0 L312.0 223.0 Z" fill="#dcdcec"/>
<path d="M317.0 201.0 L322.0 234.0" stroke="#5a586e" stroke-width="0.55"/>
<path d="M320.3 201.5 L325.3 232.7" stroke="#5a586e" stroke-width="0.55"/>
<path d="M323.6 202.0 L328.6 231.4" stroke="#5a586e" stroke-width="0.55"/>
<path d="M326.9 202.5 L331.9 230.1" stroke="#5a586e" stroke-width="0.55"/>
<path d="M330.2 203.0 L335.2 228.8" stroke="#5a586e" stroke-width="0.55"/>
<path d="M333.5 203.5 L338.5 227.5" stroke="#5a586e" stroke-width="0.55"/>
<path d="M336.8 204.0 L341.8 226.2" stroke="#5a586e" stroke-width="0.55"/>
<path d="M340.1 204.5 L345.1 224.9" stroke="#5a586e" stroke-width="0.55"/>
<path d="M343.4 205.0 L348.4 223.6" stroke="#5a586e" stroke-width="0.55"/>
<path d="M346.7 205.5 L351.7 222.3" stroke="#5a586e" stroke-width="0.55"/>
<path d="M380.6 250 C381 244 384 240 387 239.7 C391 242 394 247 395 257 L389 256 Z" fill="#e0e0ec" stroke="#1b1a24" stroke-width="0.6"/>
<path d="M354 279.4 C350 277 348.6 272 349 266 L352 268 L356 276 Z" fill="#e0e0ec" stroke="#1b1a24" stroke-width="0.6"/>
<path d="M329.6 228.5 C331 221 340 214.5 349 214.5 C356 214.5 361 217 365.3 220.8 L445 324.7 C448 330 447 336 441 340.5 C434 346 424 349 415.3 346.4 C411 345 409 342.5 407.2 339.6 L338 247 C334 241 330 236 329.6 228.5 Z" fill="url(#gt)" stroke="#1b1a24" stroke-width="1.1"/>
<path d="M411.2 330.1 C413 325 416 322 421 320 C428 318 436 318.5 441 322 C446 326 446 333 441 338.5 C434 345 424 347.5 417 345.5 C411 343 409.5 336 411.2 330.1 Z" fill="url(#gc)" stroke="#1b1a24" stroke-width="0.8"/>
<path d="M399 322 C400 316 403 311.2 408 308 C413 305 420 304 425 304.5 C429 305 431 306.5 433 308.5" fill="none" stroke="#1b1a24" stroke-width="0.7"/>
<path d="M116.5 386.5 L127.5 380" stroke="#2233dd" stroke-width="1.1"/><path d="M128.5 379.3 L124.2 380.2 L126.6 383.2 Z" fill="#2233dd"/><circle cx="125" cy="381.2" r="1.3" fill="#1a2ad0"/>
<path d="M128.5 376.5 H131 L128.5 379 H131" fill="none" stroke="#2233dd" stroke-width="0.6"/>
<path d="M116.5 386.5 L119.5 393.5 M120 394.5 L121.5 398.5" stroke="#dd2222" stroke-width="1.1"/><circle cx="118.8" cy="389" r="1.2" fill="#138a13"/><circle cx="119.8" cy="394" r="0.9" fill="#dd2222"/>
<rect x="713" y="368.9" width="40" height="17" rx="8.5" fill="#30333a"/>
<circle cx="715.4" cy="377.3" r="11.5" fill="#50545f"/>
<path d="M716 366 A11 11 0 0 1 724.5 383.5" fill="none" stroke="#4fc59a" stroke-width="0.9"/>
<text x="709" y="381.2" font-family="Liberation Sans" font-size="8.6" fill="#eceef2">35</text><text x="720.5" y="381" font-family="Liberation Sans" font-size="3.6" fill="#eceef2">%</text>
<circle cx="730.6" cy="373.2" r="0.9" fill="#3aa8f0"/><circle cx="730.6" cy="381.6" r="0.9" fill="#30c040"/>
<text x="739.5" y="375" font-family="Liberation Sans" font-size="3.8" fill="#d8dade">0<tspan font-size="2.8">k/s</tspan></text><text x="739.5" y="383.3" font-family="Liberation Sans" font-size="3.8" fill="#d8dade">0<tspan font-size="2.8">k/s</tspan></text>
</svg>
<!--/MODEL-->
<!-- VIEWPORT TOOLS -->
<svg class="a" style="left:370px;top:49.5px" width="150" height="10" viewBox="370 48 150 10">
 <g fill="none" stroke="#2f6aa8" stroke-width="0.9">
  <circle cx="378.5" cy="51.5" r="2.2"/><path d="M377 53 L374.5 55.5"/>
  <circle cx="388" cy="51.5" r="2.2"/><path d="M386.5 53 L384 55.5"/><path d="M389.5 49 L391 48.5 M391 51 L392 51"/>
  <path d="M394 55 L397 52 L399 53 L400.5 50" stroke="#555"/><path d="M394 54 H398" stroke="#2f6aa8"/>
 </g>
 <rect x="403.5" y="49" width="9" height="8" fill="#6e6e6e"/><rect x="405" y="50.5" width="2.5" height="5.5" fill="#3b8ad8"/><rect x="408" y="50.5" width="3" height="5" fill="#7ab8f0"/>
 <path d="M415 56 L419 50 L421 51.5 L417 56.5 Z" fill="#e8a030"/><path d="M415.5 50.5 Q418 49 420 52" fill="none" stroke="#6a8ab0" stroke-width="0.8"/>
 <rect x="424.5" y="51" width="7" height="6" fill="#3b80c8"/><rect x="426" y="49" width="5" height="3" fill="#bcd6ee" stroke="#3b6a98" stroke-width="0.5"/>
 <rect x="436.5" y="52.5" width="1.2" height="1.2" fill="#555"/>
 <path d="M442.5 50 L447 48.7 L450.5 50 V55.5 L446 57 L442.5 55.5 Z" fill="#5fa0d8"/><path d="M446 51.3 V57 L442.5 55.5 V50 Z" fill="#aad0f0"/>
 <rect x="453.5" y="52.5" width="1.2" height="1.2" fill="#555"/>
 <path d="M458.5 51 L461.5 49 L464.5 51 L461.5 56 Z" fill="#333"/><path d="M461.5 49 L464.5 51 L461.5 56 Z" fill="#999"/>
 <rect x="469.5" y="52.5" width="1.2" height="1.2" fill="#555"/>
 <circle cx="478.5" cy="52.5" r="3.5" fill="#d8d8d8" stroke="#aaa" stroke-width="0.5"/>
 <circle cx="489" cy="52.5" r="3.5" fill="#e04030"/><path d="M489 52.5 L485.5 52.5 A3.5 3.5 0 0 0 489 56 Z" fill="#30a040"/><path d="M489 52.5 L492.5 52.5 A3.5 3.5 0 0 1 489 56 Z" fill="#f0c020"/><path d="M489 52.5 L489 49 A3.5 3.5 0 0 0 485.5 52.5 Z" fill="#3070d0"/><rect x="485.5" y="55.5" width="7" height="1.5" fill="#333"/>
 <rect x="496.5" y="52.5" width="1.2" height="1.2" fill="#555"/>
 <rect x="502" y="49.5" width="8" height="5.5" fill="#fff" stroke="#555" stroke-width="0.7"/><path d="M506 55 V56.5 M504 56.8 H508" stroke="#555" stroke-width="0.7"/>
 <rect x="513.5" y="52.5" width="1.2" height="1.2" fill="#555"/>
</svg>
<svg class="a" style="left:734px;top:49px" width="56" height="11" viewBox="734 49 56 11">
 <g fill="none" stroke="#8a8e98" stroke-width="0.7">
  <rect x="735.5" y="51.5" width="4.5" height="5.5"/><path d="M737 53.5 H739"/>
  <rect x="747.5" y="51.5" width="4.5" height="5.5"/><path d="M749 53.5 H751"/>
  <path d="M758 56.5 H762"/>
  <rect x="768.5" y="53" width="3.5" height="3.5"/><path d="M769.5 53 V52 H773 V55.5 H772"/>
  <path d="M779.5 52.5 L783.5 56.5 M783.5 52.5 L779.5 56.5"/>
 </g>
</svg>
<!-- task pane -->
<div class="a" style="left:788px;top:48px;width:1px;height:362px;background:#d6d9e0"></div><div class="a" style="left:789px;top:48px;width:1px;height:369px;background:#5b8fd0"></div>
<svg class="a" style="left:776px;top:66px" width="14" height="76" viewBox="776 66 14 76">
 <rect x="778.5" y="69" width="11.5" height="69" fill="#dcdcdc" stroke="#b8b8b8" stroke-width="0.5"/>
 <rect x="779" y="69.3" width="11" height="9.6" fill="#fdfdfd"/>
 <path d="M779 79 H790 M779 88.8 H790 M779 98.6 H790 M779 108.4 H790 M779 118.2 H790 M779 128 H790" stroke="#b0b0b0" stroke-width="0.5"/>
 <path d="M780 75 L784.5 70.8 L789 75" fill="none" stroke="#1f5a96" stroke-width="1.3"/><path d="M781.3 74.5 V78 H787.7 V74.5" fill="#fff" stroke="#555" stroke-width="0.6"/>
 <path d="M781 81.5 L784.5 80 L788 81.5 V87 L784.5 88.3 L781 87 Z" fill="#b8b8b8" stroke="#666" stroke-width="0.6"/><path d="M781 81.5 L784.5 83 L788 81.5 M784.5 83 V88.3" fill="none" stroke="#777" stroke-width="0.5"/>
 <path d="M780.5 91 H783.5 L784.5 90 H788 V97 H780.5 Z" fill="#f4f4f4" stroke="#666" stroke-width="0.7"/><path d="M780.5 97 L782 93 H789.5 L788 97 Z" fill="#fff" stroke="#666" stroke-width="0.6"/>
 <rect x="780" y="100" width="9" height="7.5" fill="#e8b820"/><circle cx="782.6" cy="103.7" r="1.9" fill="#fff" stroke="#666" stroke-width="0.5"/><circle cx="786.4" cy="103.7" r="1.9" fill="#fff" stroke="#666" stroke-width="0.5"/>
 <circle cx="784.5" cy="113.3" r="4" fill="#f0c020"/><path d="M784.5 113.3 L784.5 109.3 A4 4 0 0 0 780.5 113.3 Z" fill="#d83030"/><path d="M784.5 113.3 L780.5 113.3 A4 4 0 0 0 784.5 117.3 Z" fill="#30a040"/><path d="M784.5 113.3 L788.5 113.3 A4 4 0 0 0 784.5 109.3 Z" fill="#3070d0"/>
 <rect x="780.5" y="119.5" width="8" height="7.5" fill="#fff" stroke="#555" stroke-width="0.6"/><rect x="780.5" y="119.5" width="8" height="2" fill="#4a88c8"/><path d="M782 123.5 H787.5 M782 125.5 H787.5" stroke="#4a88c8" stroke-width="0.7"/>
 <rect x="780.5" y="129.5" width="5" height="4" fill="#fff" stroke="#555" stroke-width="0.6"/><rect x="783" y="132" width="5.5" height="4.5" fill="#6aa8e0" stroke="#2a5f98" stroke-width="0.5"/>
</svg>
<div class="a" style="left:98px;top:222px;width:5.5px;height:12px;background:#fdfdfd;border-right:1px solid #d4d4d4;border-bottom:1px solid #e0e0e0"></div><div class="a" style="left:99.5px;top:228px;width:2.5px;height:1px;background:#999"></div>

</body></html>
